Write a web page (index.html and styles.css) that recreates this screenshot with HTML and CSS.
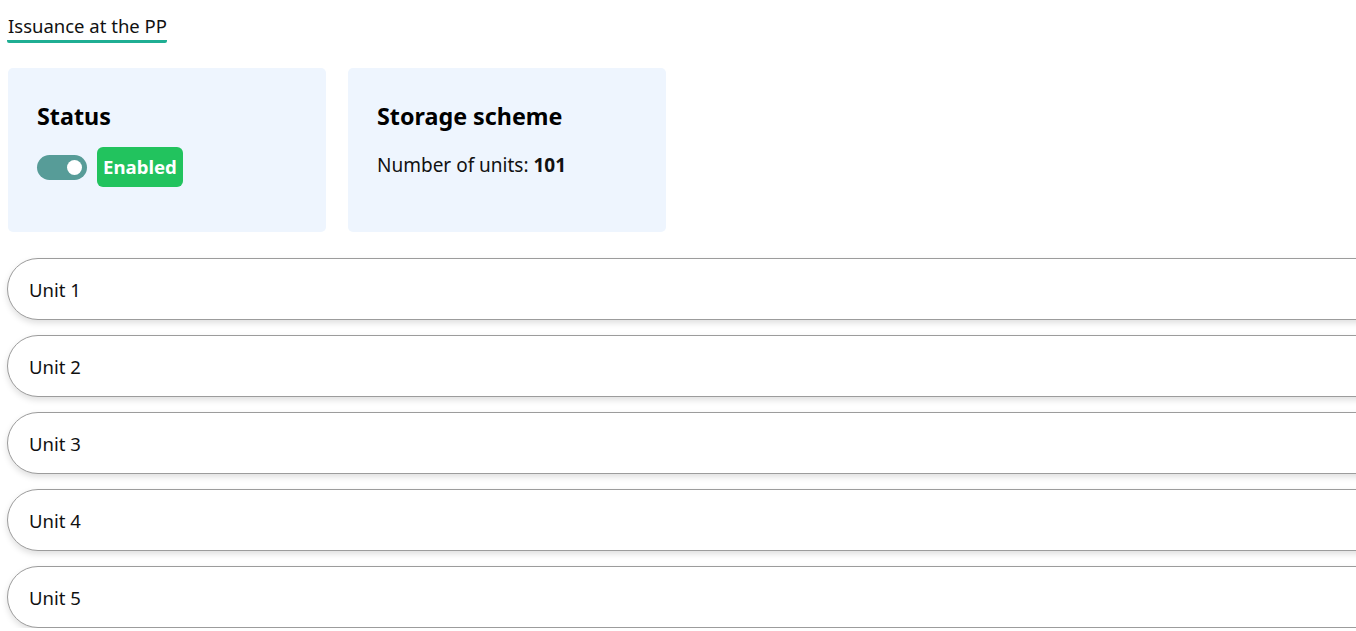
FILE: index.html
```html
<!DOCTYPE html>
<html lang="en">
<head>
<meta charset="utf-8">
<title>Issuance at the PP</title>
<link rel="stylesheet" href="styles.css">
</head>
<body>
<div class="page">
  <nav class="tabs">
    <span class="tab tab-active">Issuance at the PP</span>
  </nav>
  <section class="cards">
    <div class="card">
      <h2 class="card-title">Status</h2>
      <div class="status-row">
        <span class="toggle"><span class="knob"></span></span>
        <span class="badge">Enabled</span>
      </div>
    </div>
    <div class="card">
      <h2 class="card-title">Storage scheme</h2>
      <p class="card-text">Number of units: <b>101</b></p>
    </div>
  </section>
  <section class="units">
    <div class="unit">Unit 1</div>
    <div class="unit">Unit 2</div>
    <div class="unit">Unit 3</div>
    <div class="unit">Unit 4</div>
    <div class="unit">Unit 5</div>
  </section>
</div>
</body>
</html>
```
FILE: styles.css
```css
html, body {
  margin: 0;
  padding: 0;
  overflow: hidden;
  background: #ffffff;
}
body {
  font-family: "Noto Sans", "Open Sans", sans-serif;
  color: #111;
}
.page {
  padding: 13px 0 0 7px;
}
.tabs {
  display: flex;
}
.tab {
  font-size: 18.5px;
  line-height: 26px;
  padding: 0 0 1px 1px;
  border-bottom: 3px solid #1fae93;
  border-radius: 0 0 2px 2px;
}
.cards {
  display: flex;
  gap: 22px;
  margin-top: 25px;
  padding-left: 1px;
}
.card {
  width: 318px;
  height: 164px;
  box-sizing: border-box;
  background: #eef5fe;
  border-radius: 5px;
  padding: 33px 29px;
}
.card-title {
  margin: 0;
  font-size: 23.3px;
  line-height: 30px;
  font-weight: 700;
  color: #000;
}
.status-row {
  display: flex;
  align-items: center;
  gap: 10px;
  margin-top: 16px;
}
.toggle {
  width: 50px;
  height: 25px;
  border-radius: 13px;
  background: #579c98;
  display: flex;
  align-items: center;
  justify-content: flex-end;
  padding-right: 5px;
  box-sizing: border-box;
}
.knob {
  width: 15px;
  height: 15px;
  border-radius: 50%;
  background: #fff;
}
.badge {
  background: #22c35e;
  color: #fff;
  font-weight: 700;
  font-size: 18.6px;
  height: 40px;
  line-height: 40px;
  padding: 0 6px;
  border-radius: 6px;
}
.card-text {
  margin: 21px 0 0;
  font-size: 19px;
  line-height: 26px;
  color: #111;
}
.card-text b {
  font-weight: 700;
}
.units {
  margin-top: 26px;
  display: flex;
  flex-direction: column;
  gap: 15px;
  width: calc(100% + 60px);
}
.unit {
  height: 60px;
  flex: none;
  border: 1px solid #9c9c9c;
  border-radius: 31px;
  box-shadow: 0 3px 6px rgba(0, 0, 0, 0.13);
  display: flex;
  align-items: center;
  padding-left: 21px;
  font-size: 18.5px;
  color: #111;
  background: #fff;
}
```
